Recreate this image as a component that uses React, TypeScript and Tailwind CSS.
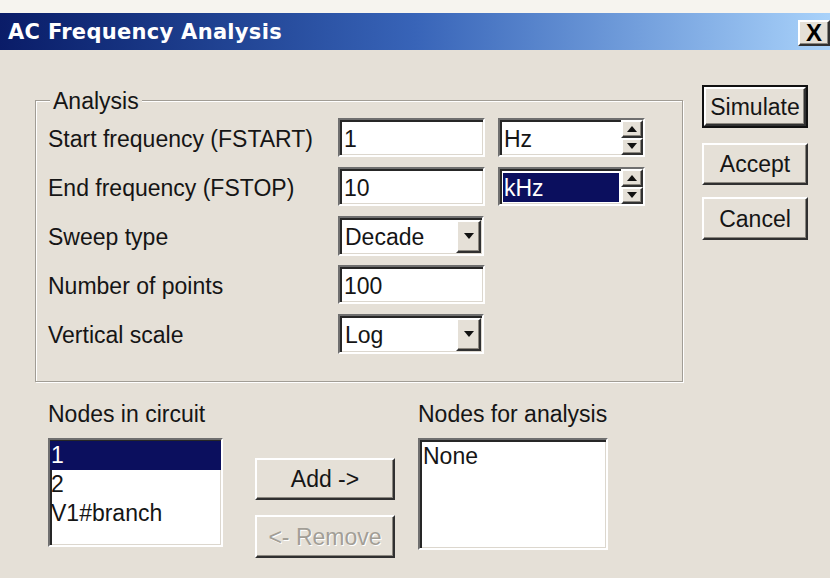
import React from 'react';

// classic 3D borders
const sunken =
  'border-2 border-t-[#6f6f6f] border-l-[#6f6f6f] border-b-white border-r-white shadow-[inset_2px_2px_0_#262626,inset_-1px_-1px_0_#dcd7ce]';
const raised =
  'border-2 border-t-white border-l-white border-b-[#303030] border-r-[#303030] shadow-[inset_-1px_-1px_0_#8b877f]';

const Tri: React.FC<{ up?: boolean }> = ({ up }) => (
  <svg width="10" height="6" viewBox="0 0 10 6">
    <polygon points={up ? '5,0 10,6 0,6' : '0,0 10,0 5,6'} fill="#111" />
  </svg>
);

const TextField: React.FC<{ value: string }> = ({ value }) => (
  <div className={`${sunken} bg-white h-[39px] w-[147px] flex items-center px-[4px] pt-[2px]`}>{value}</div>
);

const SpinField: React.FC<{ value: string; selected?: boolean }> = ({ value, selected }) => (
  <div className={`${sunken} bg-white h-[39px] w-[147px] flex items-stretch ml-[13px]`}>
    <div className="flex-1 flex items-center pl-[3px] pr-[2px] pt-[2px]">
      {selected ? (
        <span className="w-full h-[29px] bg-[#0b0f5e] text-white flex items-center px-[1px]">{value}</span>
      ) : (
        <span className="px-[1px]">{value}</span>
      )}
    </div>
    <div className="w-[22px] flex flex-col bg-[#e5e0d7]">
      <div className={`${raised} flex-1 flex items-center justify-center`}>
        <Tri up />
      </div>
      <div className={`${raised} flex-1 flex items-center justify-center`}>
        <Tri />
      </div>
    </div>
  </div>
);

const Combo: React.FC<{ value: string }> = ({ value }) => (
  <div className={`${sunken} bg-white h-[40px] w-[146px] flex items-stretch`}>
    <div className="flex-1 flex items-center px-[5px] pt-[2px]">{value}</div>
    <div className={`${raised} bg-[#e5e0d7] w-[25px] mt-[2px] mr-[1px] mb-[1px] flex items-center justify-center`}>
      <Tri />
    </div>
  </div>
);

const Row: React.FC<{ label: string; children: React.ReactNode }> = ({ label, children }) => (
  <div className="h-[39px] flex items-center">
    <div className="w-[290px] pt-[3px]">{label}</div>
    {children}
  </div>
);

const Button: React.FC<{ label: string; disabled?: boolean; className?: string }> = ({
  label,
  disabled,
  className = '',
}) => (
  <div
    className={`${raised} bg-[#e5e0d7] flex items-center justify-center ${className} ${
      disabled ? 'text-[#a29e96] [text-shadow:1px_1px_0_#fff]' : ''
    }`}
  >
    {label}
  </div>
);

export default function App() {
  return (
    <div className="w-[830px] h-[578px] overflow-hidden bg-[#e5e0d7] font-['Liberation_Sans',Arial,sans-serif] text-[23px] leading-[26px] text-[#151515]">
      <div className="h-[13px] bg-[#f6f4ef]" />
      <div className="h-[37px] bg-linear-to-r from-[#0a1c68] via-[#3864b8] to-[#a9d2fa] flex items-center justify-between pl-[8px]">
        <span className="font-['DejaVu_Sans',sans-serif] font-bold text-[21px] text-white tracking-[0.3px]">
          AC Frequency Analysis
        </span>
        <div className={`${raised} bg-[#e5e0d7] w-[32px] h-[26px] mt-[2px] flex items-center justify-center font-black text-[24px] leading-none text-black`}>
          X
        </div>
      </div>

      <div className="flex items-start pl-[35px] pt-[35px]">
        <div className="w-[648px] mt-[15px]">
          <div className="relative h-[282px] border border-[#a19d95] shadow-[inset_1px_1px_0_#fff,1px_1px_0_#fff] pl-[12px] pt-[17px] flex flex-col gap-[10px]">
            <span className="absolute -top-[13px] left-[14px] px-[3px] bg-[#e5e0d7]">Analysis</span>
            <Row label="Start frequency (FSTART)">
              <TextField value="1" />
              <SpinField value="Hz" />
            </Row>
            <Row label="End frequency (FSTOP)">
              <TextField value="10" />
              <SpinField value="kHz" selected />
            </Row>
            <Row label="Sweep type">
              <Combo value="Decade" />
            </Row>
            <Row label="Number of points">
              <TextField value="100" />
            </Row>
            <Row label="Vertical scale">
              <Combo value="Log" />
            </Row>
          </div>

          <div className="flex items-start pl-[13px] mt-[19px]">
            <div>
              <div className="mb-[11px]">Nodes in circuit</div>
              <div className={`${sunken} bg-white w-[175px] h-[109px] leading-[29px]`}>
                <div className="bg-[#0b0f5e] text-white px-[1px] mt-[1px]">1</div>
                <div className="px-[1px]">2</div>
                <div className="px-[1px]">V1#branch</div>
              </div>
            </div>
            <div className="ml-[32px] mt-[57px] flex flex-col gap-[15px]">
              <Button label="Add ->" className="w-[140px] h-[42px]" />
              <Button label="<- Remove" disabled className="w-[140px] h-[43px]" />
            </div>
            <div className="ml-[23px]">
              <div className="mb-[11px]">Nodes for analysis</div>
              <div className={`${sunken} bg-white w-[190px] h-[112px] leading-[29px]`}>
                <div className="px-[3px] mt-[2px]">None</div>
              </div>
            </div>
          </div>
        </div>

        <div className="ml-[19px] flex flex-col">
          <div className="border-2 border-[#111] w-[106px] h-[43px] flex">
            <Button label="Simulate" className="flex-1" />
          </div>
          <Button label="Accept" className="w-[106px] h-[42px] mt-[15px]" />
          <Button label="Cancel" className="w-[106px] h-[43px] mt-[12px]" />
        </div>
      </div>
    </div>
  );
}
